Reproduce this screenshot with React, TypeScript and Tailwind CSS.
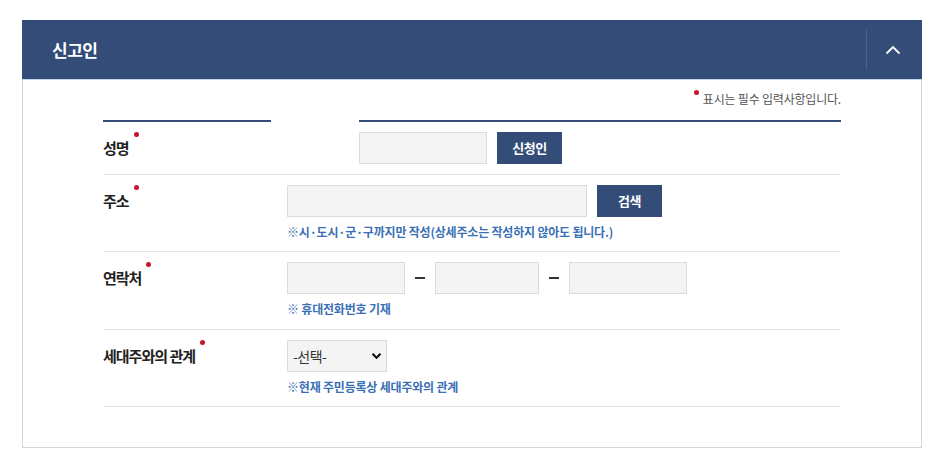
import React from "react";

const FONT = { fontFamily: '"Malgun Gothic", "Noto Sans CJK KR", "Noto Sans", sans-serif' };

function Dot() {
  return <span className="absolute right-[-10px] top-[-6px] w-[5px] h-[5px] rounded-full bg-[#c8142a]" />;
}

function Label({ text }: { text: string }) {
  return (
    <div className="w-[184px] shrink-0 pt-[10px]">
      <span className="relative inline-block text-[15px] leading-[32px] font-bold text-[#222] tracking-[-1px]">
        <span className="relative inline-block leading-[20px]">
          {text}
          <Dot />
        </span>
      </span>
    </div>
  );
}

function Help({ text }: { text: string }) {
  return (
    <p className="mt-[6px] text-[12px] leading-[18px] font-bold text-[#3a6fb5] tracking-[-0.2px]">{text}</p>
  );
}

function Input({ w }: { w: string }) {
  return <input type="text" className={`${w} h-[32px] bg-[#f4f4f4] border border-[#dcdcdc] outline-none`} />;
}

function Btn({ text, w }: { text: string; w: string }) {
  return (
    <button
      type="button"
      className={`${w} h-[32px] ml-[10px] bg-[#344d78] text-white text-[13px] font-bold tracking-[-0.5px] flex items-center justify-center`}
    >
      {text}
    </button>
  );
}

export default function App() {
  return (
    <div className="w-[939px] h-[459px] bg-white pt-[20px] pl-[22px]" style={FONT}>
      <div className="w-[900px]">
        <div className="h-[59px] bg-[#344d78] flex items-center justify-between pl-[30px]">
          <h2 className="text-[17px] font-bold text-white tracking-[-0.5px]">신고인</h2>
          <div className="flex items-center h-full">
            <div className="w-px h-[40px] bg-[#4b6290]" />
            <div className="w-[52px] mr-[3px] flex items-center justify-center">
              <svg width="16" height="10" viewBox="0 0 16 10" fill="none">
                <path d="M1.5 8.5 L8 2 L14.5 8.5" stroke="white" strokeWidth="1.8" />
              </svg>
            </div>
          </div>
        </div>
        <div className="h-px bg-[#c9d6e8]" />
        <div className="border-x border-b border-[#d5d5d5] px-[80px] pt-[10px] pb-[40px]">
          <div className="flex justify-end items-start h-[18px] mb-[12px]">
            <span className="relative inline-block text-[12px] leading-[18px] text-[#555] tracking-[-0.2px] pl-[9px]">
              <span className="absolute left-0 top-[0px] w-[5px] h-[5px] rounded-full bg-[#c8142a]" />
              표시는 필수 입력사항입니다.
            </span>
          </div>

          <div className="flex h-[2px]">
            <div className="w-[168px] bg-[#344d78]" />
            <div className="w-[88px]" />
            <div className="flex-1 bg-[#344d78]" />
          </div>

          <div className="flex border-b border-[#e5e5e5]">
            <Label text="성명" />
            <div className="flex-1 py-[10px] pl-[72px] flex">
              <Input w="w-[128px]" />
              <Btn text="신청인" w="w-[65px]" />
            </div>
          </div>

          <div className="flex border-b border-[#e5e5e5]">
            <Label text="주소" />
            <div className="flex-1 py-[10px]">
              <div className="flex">
                <Input w="w-[300px]" />
                <Btn text="검색" w="w-[65px]" />
              </div>
              <Help text="※시·도시·군·구까지만 작성(상세주소는 작성하지 않아도 됩니다.)" />
            </div>
          </div>

          <div className="flex border-b border-[#e5e5e5]">
            <Label text="연락처" />
            <div className="flex-1 pt-[10px] pb-[11px]">
              <div className="flex items-center">
                <Input w="w-[118px]" />
                <span className="mx-[10px] w-[10px] h-[2px] bg-[#333]" />
                <Input w="w-[104px]" />
                <span className="mx-[10px] w-[10px] h-[2px] bg-[#333]" />
                <Input w="w-[118px]" />
              </div>
              <Help text="※ 휴대전화번호 기재" />
            </div>
          </div>

          <div className="flex border-b border-[#e5e5e5]">
            <Label text="세대주와의 관계" />
            <div className="flex-1 py-[10px]">
              <div className="relative w-[100px] h-[32px]">
                <select className="appearance-none w-full h-full bg-[#f4f4f4] border border-[#dcdcdc] pl-[5px] text-[14px] text-[#333] outline-none tracking-[-0.5px]">
                  <option>-선택-</option>
                </select>
                <svg
                  className="absolute right-[5px] top-[12px] pointer-events-none"
                  width="11"
                  height="8"
                  viewBox="0 0 11 8"
                  fill="none"
                >
                  <path d="M1.5 1.8 L5.5 5.8 L9.5 1.8" stroke="#111" strokeWidth="2.2" />
                </svg>
              </div>
              <Help text="※현재 주민등록상 세대주와의 관계" />
            </div>
          </div>
        </div>
      </div>
    </div>
  );
}
